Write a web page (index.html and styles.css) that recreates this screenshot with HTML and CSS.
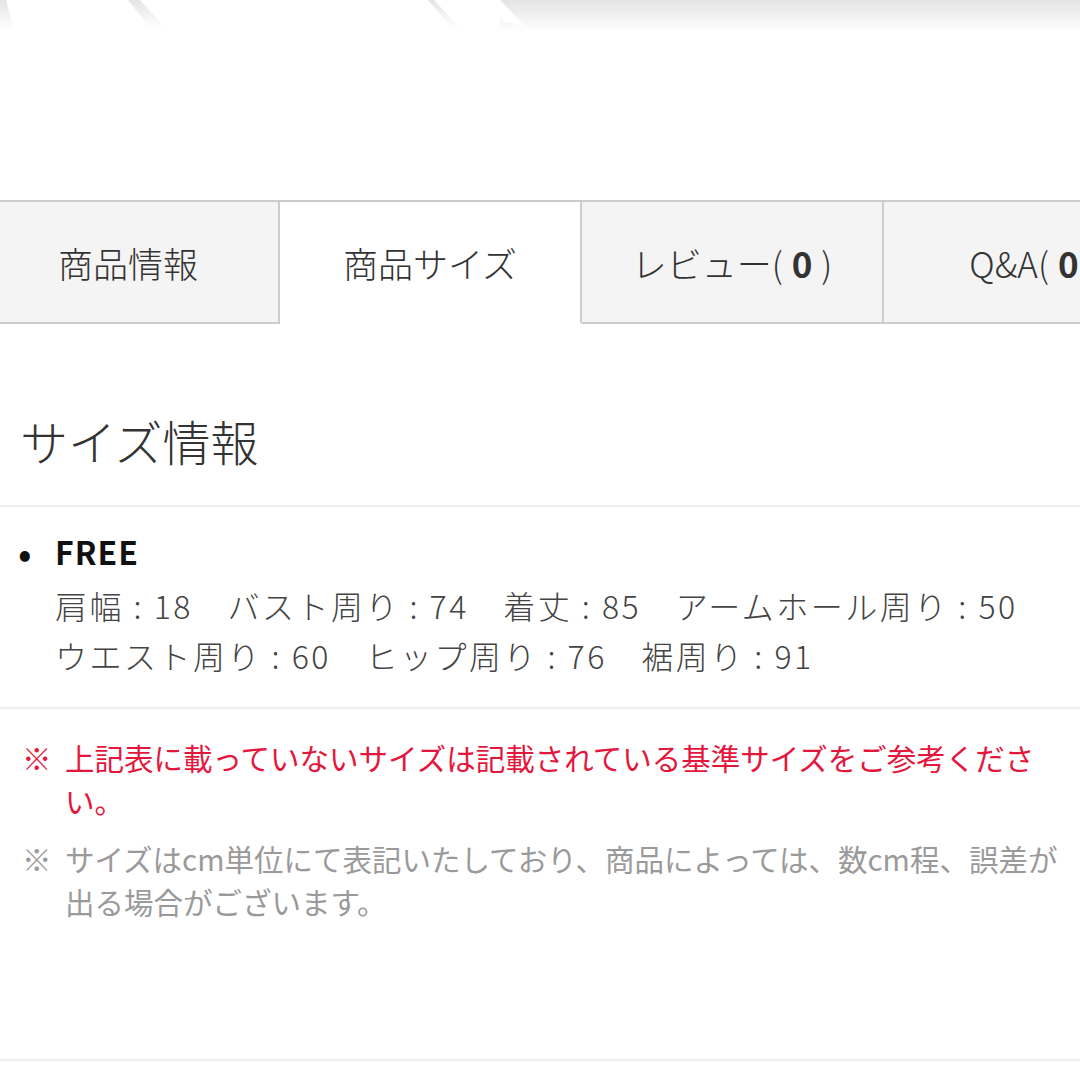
FILE: index.html
```html
<!DOCTYPE html>
<html lang="ja">
<head>
<meta charset="UTF-8">
<meta name="viewport" content="width=device-width, initial-scale=1.0">
<title>商品サイズ</title>
<link rel="stylesheet" href="styles.css">
</head>
<body>
<div id="hero">
  <svg class="hero-photo" width="1080" height="40" viewBox="0 0 1080 40">
    <defs>
      <linearGradient id="fade" x1="0" y1="0" x2="0" y2="1">
        <stop offset="0" stop-color="#e4e4e4"/>
        <stop offset="1" stop-color="#ffffff"/>
      </linearGradient>
    </defs>
    <rect x="500" y="0" width="580" height="32" fill="url(#fade)"/>
    <polygon points="0,0 6,0 14,30 0,30" fill="url(#fade)"/>
    <polygon points="128,0 140,0 165,28 150,28" fill="url(#fade)"/>
    <polygon points="430,0 500,0 525,26 505,22 500,18 480,30 460,30" fill="#ffffff"/>
    <polygon points="428,0 434,0 460,28 452,28" fill="url(#fade)"/>
  </svg>
</div>

<div id="tabs">
  <div class="tab">商品情報</div>
  <div class="tab active">商品サイズ</div>
  <div class="tab">レビュー( <b>0</b> )</div>
  <div class="tab">Q&amp;A( <b>0</b> )</div>
</div>

<div id="size-info">
  <h2 class="section-title">サイズ情報</h2>

  <div class="size-list">
    <div class="size-item">
      <span class="bullet">•</span>
      <div>
        <div class="size-name">FREE</div>
        <div class="size-spec">肩幅 : 18　バスト周り : 74　着丈 : 85　アームホール周り : 50</div>
        <div class="size-spec">ウエスト周り : 60　ヒップ周り : 76　裾周り : 91</div>
      </div>
    </div>
  </div>

  <div class="notes">
    <div class="note red">
      <span class="mark">※</span>
      <span>上記表に載っていないサイズは記載されている基準サイズをご参考ください。</span>
    </div>
    <div class="note gray">
      <span class="mark">※</span>
      <span>サイズはcm単位にて表記いたしており、商品によっては、数cm程、誤差が出る場合がございます。</span>
    </div>
  </div>
</div>
</body>
</html>
```

FILE: styles.css
```css
body {
  margin: 0;
  font-family: "Noto Sans CJK JP", "Noto Sans", sans-serif;
  background-color: #fff;
  color: #333;
  overflow: hidden;
}
#hero {
  height: 200px;
}
.hero-photo {
  display: block;
}
/* Tabs */
#tabs {
  display: flex;
  margin-left: -22px;
  border-top: 2px solid #ccc;
}
.tab {
  flex-shrink: 0;
  box-sizing: border-box;
  width: 302px;
  height: 122px;
  display: flex;
  align-items: center;
  justify-content: center;
  white-space: nowrap;
  background-color: #f4f4f4;
  border-right: 2px solid #ccc;
  border-bottom: 2px solid #ccc;
  font-size: 35px;
  font-weight: 300;
  color: #333;
}
.tab b {
  margin: 0 9px;
  font-weight: bold;
}
.tab.active {
  background-color: #fff;
  border-bottom-color: #fff;
}
/* Size info */
#size-info {
  border-bottom: 2px solid #eee;
}
.section-title {
  margin: 86px 0 0;
  padding: 0 20px 35px;
  font-size: 48px;
  font-weight: 300;
  line-height: 60px;
  color: #333;
  border-bottom: 2px solid #eee;
}
.size-list {
  padding: 19px 0 27px;
  border-bottom: 2px solid #eee;
}
.size-item {
  display: flex;
}
.bullet {
  width: 55px;
  padding-left: 18px;
  box-sizing: border-box;
  font-size: 40px;
  line-height: 50px;
  color: #111;
}
.size-name {
  font-size: 32px;
  font-weight: bold;
  letter-spacing: 1px;
  line-height: 50px;
  color: #111;
}
.size-spec {
  font-size: 32px;
  font-weight: 300;
  letter-spacing: 2.5px;
  line-height: 50px;
  color: #444;
}
.size-name + .size-spec {
  margin-top: 4px;
}
.notes {
  padding: 27px 22px 136px;
}
.note {
  display: flex;
  font-size: 29.5px;
  line-height: 43px;
}
.note .mark {
  flex-shrink: 0;
  width: 43px;
}
.note.red {
  color: #e5163c;
}
.note.gray {
  margin-top: 15px;
  color: #9a9a9a;
}
```
